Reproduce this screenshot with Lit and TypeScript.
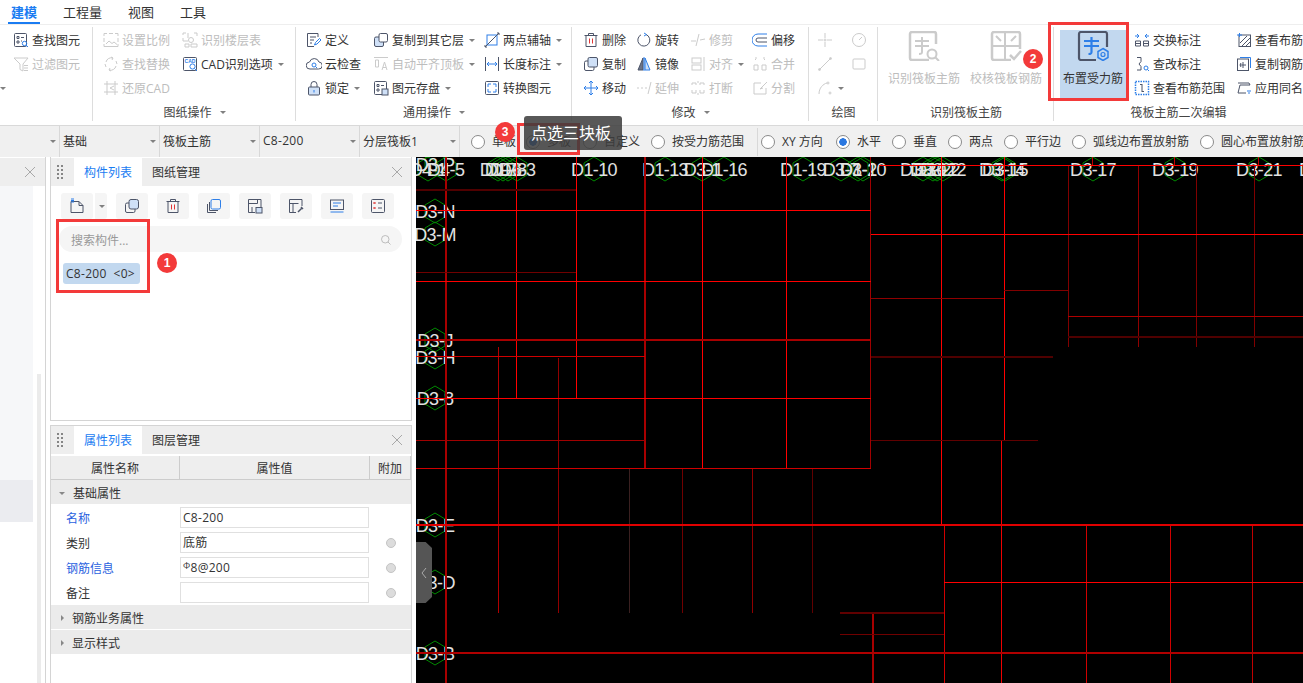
/**
 * Ribbon CAD editor screen: ribbon, option bar, component panels and drawing canvas
 */

import { LitElement, html, svg, css, TemplateResult } from 'lit';
import { customElement } from 'lit/decorators.js';

const ICONS: Record<string, TemplateResult> = {
  find: svg`<rect x="1.5" y="1.5" width="12" height="13" rx="1"/><path d="M4 4.5h2v2H4zM8 5.5h3M4 9h2v2H4zM8 9h1"/><circle class="a" cx="11.5" cy="11.5" r="2.2"/><path class="a" d="M13 13l2 2"/>`,
  filter: svg`<path d="M1 2h14L10 8v7L7 13.5V8zM11 9.5h4M11 12h4M11 14.5h4"/>`,
  scale: svg`<path d="M1 4V1.5h3M6 1.5h4M12 1.5h3V4M1 6v4M15 6v4M1 12v2.5h14V12M3 12l3-3 3 2.5 2-1.5 3 2.5"/>`,
  replace: svg`<path d="M3 6a5.5 5.5 0 0 1 7-4M13 10a5.5 5.5 0 0 1-7 4M8 1l2 1-1 2M8 15l-2-1 1-2M13 5l1 3M3 11l-1-3"/>`,
  restore: svg`<path d="M4 1v14M12 1v14M1 4h14M1 12h14M11 6L7 8l4 2"/>`,
  layers: svg`<path d="M1 3V1h3M1 6v3h5M6 1v5M12 1h3v3M3 12v3h4v-3zM9 12h6v3H9z"/><circle cx="9" cy="8" r="2.5"/>`,
  cad: svg`<rect x="1.5" y="1.5" width="13" height="13" rx="1"/><text class="a t" x="2.6" y="6.8">CAD</text><circle class="a" cx="10.5" cy="10.5" r="2.6"/><path class="a" d="M12.5 12.5l2.5 2.5"/>`,
  define: svg`<path d="M12 5V1.5H1.5v13H8M4 5h6M4 8h4M4 11h2"/><path class="a" d="M8.5 13l1-2.5 4-4 1.5 1.5-4 4z"/>`,
  cloud: svg`<path d="M4 13a3.5 3.5 0 0 1-.5-7A5 5 0 0 1 13 6a3.5 3.5 0 0 1-.5 7z"/><circle class="a" cx="8" cy="9" r="2"/><path class="a" d="M9.5 10.5l1.5 1.5"/>`,
  lock: svg`<path d="M5 7V4.5a3 3 0 0 1 6 0V7"/><rect class="l" x="2.5" y="7" width="11" height="8" rx="1"/><path class="a" d="M8 10v2.5"/>`,
  copyLayer: svg`<rect class="l" x="1.5" y="5" width="9" height="9.5" rx="1.5"/><rect x="6" y="1.5" width="8.5" height="8.5" rx="1.5" fill="#fff"/>`,
  autoAlign: svg`<path d="M1 1.5h14M2.5 4v7h3V4zM9 14l2.5-8L14 14M10 11.500h3"/>`,
  store: svg`<rect x="1.500" y="1.500" width="12" height="13" rx="1"/><path d="M4 4.500h2v2H4zM8 5.500h3M4 9h2v2H4z"/><rect class="l" x="9" y="9" width="6" height="6"/>`,
  axis: svg`<rect class="a" x="3" y="3" width="10" height="10"/><path d="M1 15L15 1M13 1h2v2M1 13v2h2"/>`,
  length: svg`<path d="M1.500 1v14M14.500 1v14"/><path class="a" d="M3 8h10M5 6L3 8l2 2M11 6l2 2-2 2"/>`,
  convert: svg`<rect x="1.500" y="1.500" width="13" height="13" rx="1"/><path class="a" d="M4 7V4h3M12 9v3H9M9 4h3v3M4 9v3h3"/>`,
  del: svg`<path d="M1.500 3.500h13M5.500 3.500V1.500h5v2M3 3.500v11h10v-11"/><path class="r" d="M6.500 6.500v5M9.500 6.500v5"/>`,
  copy: svg`<rect class="l" x="5" y="1.500" width="9.500" height="9.500" rx="1.500"/><path d="M5 5H3a1.500 1.500 0 0 0-1.500 1.500V13A1.500 1.500 0 0 0 3 14.500h6.500A1.500 1.500 0 0 0 11 13v-2"/>`,
  move: svg`<path class="a" d="M8 1v14M1 8h14M6 3l2-2 2 2M6 13l2 2 2-2M3 6L1 8l2 2M13 6l2 2-2 2"/>`,
  rotate: svg`<path d="M10 2.500A6 6 0 1 1 5 2.800"/><path class="a" d="M8 1l2.500 1.500L8 4"/>`,
  mirror: svg`<path class="lf" d="M9 2l5 12H9z"/><path d="M7 2L2 14h5z" fill="#6c7488"/><path class="a" d="M8 1v14"/>`,
  trim: svg`<path d="M1 9h5M10 8l5-1M9 2L6 14"/>`,
  align: svg`<rect x="2" y="2" width="9" height="5"/><rect x="2" y="9" width="9" height="5"/><path d="M14 1v14"/>`,
  extend: svg`<path d="M1 8h2M5 8h2M9 8h2M15 2l-3 12"/>`,
  breakAt: svg`<path d="M2 5V3h4v2M10 5V3h4v2M2 10v3h4v-3M10 10v3h4v-3M8 1v2M8 13v2"/>`,
  offset: svg`<path class="a" d="M15 2H6a6 6 0 0 0 0 12h9"/><path d="M15 6H6a2 2 0 0 0 0 4h9"/>`,
  merge: svg`<path d="M2 9h4v5H2zM10 9h4v5h-4zM3 3l1 1M13 3l-1 1M4 1v2M12 1v2"/>`,
  split: svg`<path d="M9 3H2v11h12V8M15 2L8 9M8 9l3-1"/>`,
  point: svg`<path d="M8 1v5M8 10v5M1 8h5M10 8h5"/><circle cx="8" cy="8" r="1"/>`,
  radius: svg`<circle cx="8" cy="8" r="6.500"/><path d="M8 8l3-3"/>`,
  line: svg`<path d="M2 14L14 2"/><circle cx="2.500" cy="13.500" r="1"/><circle cx="13.500" cy="2.500" r="1"/>`,
  box: svg`<rect x="2" y="3" width="12" height="10" rx="1"/>`,
  arc: svg`<path d="M2 14c0-6 4-10 8-11"/><circle cx="11" cy="3" r="1"/><circle cx="13" cy="13" r="1"/>`,
  swap: svg`<path d="M1.500 9h5v5h-5zM9.500 9h5v5h-5zM1.500 11.500h5M9.500 11.500h5"/><path class="a" d="M1 4h4M3 2l2 2-2 2M15 4h-4M13 2l-2 2 2 2"/>`,
  edit: svg`<path d="M3 1.500h4v4L5 8l2 2.500V14H3"/><circle class="a" cx="12" cy="12" r="2"/><path class="a" d="M13.500 13.500l1.500 1.500"/>`,
  range: svg`<rect class="a dash" x="1.500" y="1.500" width="13" height="13"/><path d="M8 4v8M6 4.500h2M8 11.500h2"/>`,
  hatch: svg`<rect x="3" y="3" width="11.500" height="11.500"/><path d="M4 11l7-7M6 14l8-8M10 14l4-4"/><path class="a" d="M1 3h5M3.500 1v4"/>`,
  copyBar: svg`<rect x="1.500" y="3" width="11" height="11.500"/><path class="a" d="M4 1.500h10.500V12"/><path d="M4 9h6M7 6v6M5 7L4 9l1 2"/>`,
  apply: svg`<path d="M2 3h11l1 2H4l-2 8h8"/><path class="a" d="M11 11h4M12 13h2"/>`,
  newDoc: svg`<path d="M2 3.500h8l4 4v7H2z"/><path d="M10 3.500v4h4"/><path class="a" d="M2 1h3M2 2.500h3M2 4h3"/>`,
  copyTool: svg`<rect class="l" x="5" y="1.500" width="9.500" height="9.500" rx="2"/><path d="M5 5H3a1.500 1.500 0 0 0-1.500 1.500V13A1.500 1.500 0 0 0 3 14.500h6.500A1.500 1.500 0 0 0 11 13v-2"/>`,
  copyMany: svg`<rect class="a" x="5" y="1.500" width="9.500" height="9.500" rx="1.500"/><path d="M3.500 4v8.500h8.500M1.500 6v8.500h8.500"/>`,
  saveTpl: svg`<path d="M14 9V1.500H1.500v13H8M1.500 5.500h9V1.500M5 14.500V9"/><rect class="l" x="9" y="9.500" width="6" height="5.500"/>`,
  pick: svg`<path d="M14 8V1.500H1.500v13H8M1.500 5.500h9M5 14.500V5.500"/><path d="M10 14l4-4M13 9l2 2" stroke-width="1.500"/>`,
  listing: svg`<rect x="1.500" y="2" width="13" height="9.500"/><path class="a" d="M4 5h8M4 8h5M1.500 14h13"/>`,
  attrs: svg`<rect x="1.500" y="1.500" width="13" height="13" rx="1"/><path class="r" d="M3.500 4l2 2M5.500 4l-2 2M3.500 9l2 2M5.500 9l-2 2"/><path d="M8 5h4M8 10h4"/>`,
  trash: svg`<path d="M1.500 3.500h13M5.500 3.500V1.500h5v2M3 3.500v11h10v-11"/><path class="r" d="M6.500 6.500v5M9.500 6.500v5"/>`,
  search: svg`<circle cx="7" cy="7" r="5"/><path d="M10.500 10.500l3.500 3.500"/>`,
};

const BIG_ICONS: Record<string, TemplateResult> = {
  identify: svg`<path d="M21 29H4a2 2 0 0 1-2-2V3a2 2 0 0 1 2-2h22a2 2 0 0 1 2 2v10" stroke-width="2.500"/><path d="M7 10h14M7 15h14M14 6v15c0 2-1 2-3 2" stroke-width="2"/><circle cx="24" cy="23" r="4.500" stroke-width="2"/><path d="M27.500 26.500l3.500 3.500" stroke-width="2"/>`,
  verify: svg`<path d="M21 29H4a2 2 0 0 1-2-2V3a2 2 0 0 1 2-2h24a2 2 0 0 1 2 2v15" stroke-width="2.500"/><path d="M15 1v28M2 15h28M6 5l5 5M26 5l-5 5" stroke-width="2"/><path d="M20 24l4 4 7-8" stroke-width="2.500"/>`,
  place: svg`<path d="M19 29H4a2 2 0 0 1-2-2V3a2 2 0 0 1 2-2h24a2 2 0 0 1 2 2v13" stroke-width="2.200"/><path class="a" d="M7 10h15M7 15h15M14.500 6v15c0 2-1 2-3 2" stroke-width="2.200"/><path class="a" d="M26 17.500l5 3v6l-5 3-5-3v-6z" fill="#c2d8ef" stroke-width="1.500"/><circle class="a" cx="26" cy="23.500" r="2" stroke-width="1.200"/>`,
};

interface RibbonItem {
  icon: string;
  text?: string;
  caret?: boolean;
  off?: boolean;
}
interface RibbonCol {
  w?: number;
  items?: RibbonItem[];
  big?: { icon: string; text: string; off?: boolean; on?: boolean; w: number };
}
interface RibbonGroup {
  w: number;
  pad: number;
  label: string;
  caret?: boolean;
  cols: RibbonCol[];
}

const GROUPS: RibbonGroup[] = [
  {
    w: 93,
    pad: 13,
    label: '',
    cols: [
      {
        items: [
          { icon: 'find', text: '查找图元' },
          { icon: 'filter', text: '过滤图元', off: true },
        ],
      },
    ],
  },
  {
    w: 203,
    pad: 10,
    label: '图纸操作',
    caret: true,
    cols: [
      {
        w: 79,
        items: [
          { icon: 'scale', text: '设置比例', off: true },
          { icon: 'replace', text: '查找替换', off: true },
          { icon: 'restore', text: '还原CAD', off: true },
        ],
      },
      {
        items: [
          { icon: 'layers', text: '识别楼层表', off: true },
          { icon: 'cad', text: 'CAD识别选项', caret: true },
        ],
      },
    ],
  },
  {
    w: 276,
    pad: 10,
    label: '通用操作',
    caret: true,
    cols: [
      {
        w: 67,
        items: [
          { icon: 'define', text: '定义' },
          { icon: 'cloud', text: '云检查' },
          { icon: 'lock', text: '锁定', caret: true },
        ],
      },
      {
        w: 111,
        items: [
          { icon: 'copyLayer', text: '复制到其它层', caret: true },
          { icon: 'autoAlign', text: '自动平齐顶板', caret: true, off: true },
          { icon: 'store', text: '图元存盘', caret: true },
        ],
      },
      {
        items: [
          { icon: 'axis', text: '两点辅轴', caret: true },
          { icon: 'length', text: '长度标注', caret: true },
          { icon: 'convert', text: '转换图元' },
        ],
      },
    ],
  },
  {
    w: 237,
    pad: 11,
    label: '修改',
    caret: true,
    cols: [
      {
        w: 53,
        items: [
          { icon: 'del', text: '删除' },
          { icon: 'copy', text: '复制' },
          { icon: 'move', text: '移动' },
        ],
      },
      {
        w: 54,
        items: [
          { icon: 'rotate', text: '旋转' },
          { icon: 'mirror', text: '镜像' },
          { icon: 'extend', text: '延伸', off: true },
        ],
      },
      {
        w: 62,
        items: [
          { icon: 'trim', text: '修剪', off: true },
          { icon: 'align', text: '对齐', caret: true, off: true },
          { icon: 'breakAt', text: '打断', off: true },
        ],
      },
      {
        items: [
          { icon: 'offset', text: '偏移' },
          { icon: 'merge', text: '合并', off: true },
          { icon: 'split', text: '分割', off: true },
        ],
      },
    ],
  },
  {
    w: 69,
    pad: 8,
    label: '绘图',
    cols: [
      {
        w: 34,
        items: [
          { icon: 'point', off: true },
          { icon: 'line', off: true },
          { icon: 'arc', caret: true, off: true },
        ],
      },
      {
        items: [
          { icon: 'radius', off: true },
          { icon: 'box', off: true },
        ],
      },
    ],
  },
  {
    w: 176,
    pad: 10,
    label: '识别筏板主筋',
    cols: [
      { w: 82, big: { icon: 'identify', text: '识别筏板主筋', off: true, w: 72 } },
      { big: { icon: 'verify', text: '校核筏板钢筋', off: true, w: 72 } },
    ],
  },
  {
    w: 249,
    pad: 6,
    label: '筏板主筋二次编辑',
    cols: [
      { w: 74, big: { icon: 'place', text: '布置受力筋', on: true, w: 66 } },
      {
        w: 102,
        items: [
          { icon: 'swap', text: '交换标注' },
          { icon: 'edit', text: '查改标注' },
          { icon: 'range', text: '查看布筋范围' },
        ],
      },
      {
        items: [
          { icon: 'hatch', text: '查看布筋范围' },
          { icon: 'copyBar', text: '复制钢筋' },
          { icon: 'apply', text: '应用同名' },
        ],
      },
    ],
  },
];

const SELECTS = [
  { w: 60, text: '' },
  { w: 100, text: '基础' },
  { w: 100, text: '筏板主筋' },
  { w: 100, text: 'C8-200', lat: true },
  { w: 100, text: '分层筏板1' },
];

const MODES = [
  { w: 55, text: '单板' },
  { w: 57, text: '多板', on: true },
  { w: 68, text: '自定义' },
  { w: 106, text: '按受力筋范围' },
];

const DIRECTIONS = [
  { w: 75, text: 'XY 方向' },
  { w: 56, text: '水平', on: true },
  { w: 56, text: '垂直' },
  { w: 56, text: '两点' },
  { w: 68, text: '平行边' },
  { w: 128, text: '弧线边布置放射筋' },
  { w: 110, text: '圆心布置放射筋' },
];

const TOOLS = ['copyTool', 'trash', 'copyMany', 'saveTpl', 'pick', 'listing', 'attrs'];

// x1, y1, x2, y2, colour, stroke width
type Seg = [number, number, number, number, string, number];

const SEGMENTS: Seg[] = [
  [446, 157, 446, 683, '#a80000', 2],
  [516, 157, 516, 398, '#ff0000', 1],
  [576, 157, 576, 398, '#ff0000', 1],
  [645, 157, 645, 468, '#a80000', 2],
  [702, 157, 702, 468, '#ff0000', 1],
  [786, 157, 786, 468, '#ff0000', 1],
  [498, 347, 498, 613, '#b00000', 1],
  [558, 358, 558, 613, '#900000', 1],
  [629, 468, 629, 613, '#3a2020', 1],
  [682, 468, 682, 613, '#700000', 1],
  [752, 468, 752, 613, '#900000', 1],
  [812, 468, 812, 613, '#600000', 1],
  [870, 157, 870, 468, '#a00000', 1],
  [873, 613, 873, 683, '#a80000', 2],
  [941, 157, 941, 524, '#ff0000', 1],
  [944, 524, 944, 683, '#d00000', 1],
  [1004, 157, 1004, 441, '#ff0000', 1],
  [1001, 441, 1001, 683, '#f00000', 1],
  [1068, 165, 1068, 347, '#800000', 1],
  [1138, 165, 1138, 347, '#900000', 1],
  [1196, 165, 1196, 347, '#800000', 1],
  [1254, 165, 1254, 347, '#800000', 1],
  [1092, 157, 1092, 165, '#c00000', 1],
  [1174, 157, 1174, 165, '#c00000', 1],
  [1258, 157, 1258, 165, '#c00000', 1],
  [1086, 524, 1086, 683, '#d00000', 1],
  [1170, 524, 1170, 683, '#d00000', 1],
  [1252, 524, 1252, 683, '#c00000', 1],
  [879, 165, 1303, 165, '#ff0000', 1],
  [416, 190, 576, 190, '#500000', 2],
  [416, 210, 871, 210, '#ff0000', 1],
  [871, 234, 1303, 234, '#ff0000', 1],
  [416, 272, 576, 272, '#700000', 1],
  [416, 281, 871, 281, '#ff0000', 1],
  [1004, 290, 1068, 290, '#800000', 1],
  [871, 298, 1004, 298, '#900000', 1],
  [1068, 316, 1303, 316, '#b00000', 1],
  [1068, 337, 1303, 337, '#500000', 2],
  [416, 340, 871, 340, '#a80000', 2],
  [416, 356, 645, 356, '#d00000', 1],
  [871, 357, 1053, 357, '#500000', 2],
  [416, 398, 871, 398, '#ff0000', 1],
  [416, 440, 645, 440, '#a00000', 1],
  [871, 440, 1038, 440, '#600000', 1],
  [416, 468, 871, 468, '#d00000', 1],
  [416, 525, 1303, 525, '#e00000', 2],
  [944, 582, 1303, 582, '#ff0000', 1],
  [840, 613, 944, 613, '#600000', 2],
  [840, 634, 944, 634, '#700000', 1],
  [416, 653, 1303, 653, '#b00000', 2],
];

const TOP_AXES: [number, string][] = [
  [428, 'D4-1'],
  [446, 'D4-5'],
  [498, 'D1-7'],
  [503, 'D1-6'],
  [508, 'D1-8'],
  [517, 'D1-3'],
  [594, 'D1-10'],
  [665, 'D1-13'],
  [702, 'D3-1'],
  [724, 'D1-16'],
  [803, 'D1-19'],
  [841, 'D3-7'],
  [858, 'D3-1'],
  [863, 'D1-20'],
  [923, 'D3-10'],
  [933, 'D3-12'],
  [937, 'D3-22'],
  [943, 'D3-12'],
  [1002, 'D3-14'],
  [1005, 'D3-15'],
  [1093, 'D3-17'],
  [1175, 'D3-19'],
  [1259, 'D3-21'],
  [1322, 'D3-23'],
];

const SIDE_AXES: [number, string][] = [
  [164, 'D3-P'],
  [211, 'D3-N'],
  [234, 'D3-M'],
  [340, 'D3-J'],
  [357, 'D3-H'],
  [398, 'D3-8'],
  [525, 'D3-E'],
  [582, 'D3-D'],
  [653, 'D3-B'],
];

const hexagon = (x: number, y: number) =>
  svg`<polygon class="hex" points="${x},${y - 12} ${x + 10},${y - 6} ${x + 10},${y + 6} ${x},${y + 12} ${x - 10},${y + 6} ${x - 10},${y - 6}"/>`;

@customElement('app-root')
export class AppRoot extends LitElement {
  static override styles = css`
    :host {
      display: block;
      position: relative;
      width: 1303px;
      height: 683px;
      overflow: hidden;
      background: #fff;
      color: #333;
      font: 12px 'Open Sans', 'Noto Sans CJK SC', 'Liberation Sans', sans-serif;
    }

    .ico {
      flex: none;
      width: 16px;
      height: 16px;
      fill: none;
      stroke: currentColor;
      stroke-width: 1;
      color: #4d5569;
      --a: #2e7fe8;
      --l: #cfe0f7;
      --r: #e03535;
    }
    .ico .a {
      stroke: var(--a);
    }
    .ico .r {
      stroke: var(--r);
    }
    .ico .l {
      fill: var(--l);
    }
    .ico .lf {
      fill: var(--l);
      stroke: var(--a);
    }
    .ico .dash {
      stroke-dasharray: 1.5 1;
      stroke-width: 1.5;
    }
    .ico .t {
      font: bold 5px 'Liberation Sans', sans-serif;
      fill: var(--a);
      stroke: none;
    }
    .off .ico {
      color: #cbcbcb;
      --a: #cbcbcb;
      --l: #fff;
      --r: #cbcbcb;
    }

    .select .lbl,
    .radio-item .lbl {
      margin-top: -2px;
    }

    .tabs {
      display: flex;
      gap: 26px;
      height: 24px;
      padding-left: 11px;
      border-bottom: 1px solid #eee;
      font-size: 13px;
      line-height: 24px;
    }
    .tab {
      position: relative;
    }
    .tab.on {
      color: #1a7cf2;
      font-weight: 700;
    }
    .tab.on::after {
      content: '';
      position: absolute;
      left: -3px;
      right: -3px;
      bottom: 0;
      height: 2px;
      background: #1a7cf2;
    }

    .ribbon {
      display: flex;
      height: 100px;
      border-bottom: 1px solid #d9d9d9;
    }
    .group {
      display: flex;
      flex: none;
      flex-direction: column;
      box-sizing: border-box;
      position: relative;
    }
    .group::after {
      content: '';
      position: absolute;
      right: 0;
      top: 2px;
      bottom: 4px;
      width: 1px;
      background: #ddd;
    }
    .group:last-child::after {
      display: none;
    }
    .cols {
      display: flex;
      height: 72px;
      padding-top: 3px;
    }
    .col {
      flex: none;
      white-space: nowrap;
    }
    .row {
      display: flex;
      align-items: center;
      gap: 3px;
      height: 24px;
    }
    .row.off,
    .big.off {
      color: #bdbdbd;
    }
    .big {
      display: flex;
      flex-direction: column;
      align-items: center;
      box-sizing: border-box;
      height: 68px;
      margin-top: 2px;
      padding-top: 1px;
      line-height: 16px;
      white-space: nowrap;
    }
    .big.on {
      background: #c2d8ef;
      color: #333;
    }
    .big .ico {
      width: 32px;
      height: 30px;
      margin-bottom: 10px;
    }
    .group-label {
      display: flex;
      align-items: center;
      justify-content: center;
      gap: 6px;
      height: 24px;
      color: #444;
    }
    .caret {
      flex: none;
      width: 0;
      height: 0;
      margin-left: 2px;
      border: 3px solid transparent;
      border-top: 3px solid #808080;
      border-bottom: 0;
    }
    .lone {
      position: absolute;
      left: -2px;
      top: 87px;
    }

    .options {
      display: flex;
      align-items: center;
      height: 31px;
      background: #f0f0f0;
      white-space: nowrap;
    }
    .select {
      display: flex;
      flex: none;
      align-items: center;
      justify-content: space-between;
      box-sizing: border-box;
      height: 31px;
      padding: 0 3px 0 3px;
      border-right: 1px solid #d8d8d8;
    }
    .select .lat {
      letter-spacing: 0.3px;
    }
    .radio-item {
      display: flex;
      flex: none;
      align-items: center;
      gap: 7px;
    }
    .radio {
      flex: none;
      box-sizing: border-box;
      width: 14px;
      height: 14px;
      border: 1px solid #8a8a8a;
      border-radius: 50%;
      background: #fff;
    }
    .radio.on {
      background: radial-gradient(circle, #2a77e0 0 3.5px, #fff 4px);
      border-color: #8a8a8a;
    }
    .modes {
      display: flex;
      padding-left: 11px;
    }
    .opt-sep {
      flex: none;
      width: 1px;
      height: 28px;
      margin-right: 3px;
      background: #d8d8d8;
    }

    .main {
      display: flex;
      height: 526px;
    }
    .sidebar {
      display: flex;
      flex: none;
      flex-direction: column;
      box-sizing: border-box;
      width: 46px;
      border-right: 1px solid #d4d4d4;
    }
    .side-head {
      display: flex;
      align-items: center;
      justify-content: flex-end;
      flex: none;
      height: 28px;
      margin-top: 1px;
      padding-right: 1px;
      background: #eee;
    }
    .side-body {
      display: flex;
      flex: 1;
      gap: 4px;
    }
    .side-list {
      display: flex;
      flex-direction: column;
      justify-content: flex-end;
      box-sizing: border-box;
      width: 33px;
      height: 336px;
      background: #f6f7f9;
    }
    .side-pick {
      height: 42px;
      background: #ebecf0;
    }
    .side-track {
      width: 4px;
      margin-top: 188px;
      background: #ebebeb;
    }

    .panels {
      display: flex;
      flex: none;
      flex-direction: column;
      gap: 4px;
      width: 362px;
      margin-left: 4px;
    }
    .panel {
      box-sizing: border-box;
      border: 1px solid #d4d4d4;
      background: #fff;
    }
    .panel.list {
      height: 264px;
      border-top: 0;
    }
    .panel.attrs {
      flex: 1;
      border-bottom: 0;
    }
    .panel-head {
      display: flex;
      align-items: center;
      height: 28px;
      margin-top: 1px;
      background: #eee;
    }
    .panel.attrs .panel-head {
      margin-top: 0;
    }
    .grip {
      flex: none;
      width: 6px;
      height: 14px;
      margin: 0 11px 0 6px;
      background: conic-gradient(#858585 25%, transparent 0) -2px 0 / 4px 4px;
    }
    .panel-tab {
      display: flex;
      align-items: center;
      height: 28px;
      padding: 0 10px;
    }
    .panel-tab.on {
      background: #fff;
      color: #1a7cf2;
    }
    .close {
      margin-left: auto;
      margin-right: 9px;
      width: 10px;
      height: 10px;
      fill: none;
      stroke: #a8a8a8;
      stroke-width: 1;
    }
    .tools {
      display: flex;
      gap: 9px;
      padding: 7px 0 0 10px;
    }
    .tool {
      display: flex;
      align-items: center;
      justify-content: center;
      width: 32px;
      height: 26px;
      border-radius: 3px;
      background: #f5f5f5;
    }
    .tool-split {
      display: flex;
      align-items: center;
      justify-content: center;
      width: 12px;
      height: 26px;
      margin-left: -8px;
      border-left: 1px solid #fff;
      border-radius: 0 3px 3px 0;
      background: #f5f5f5;
    }
    .search {
      display: flex;
      align-items: center;
      justify-content: space-between;
      box-sizing: border-box;
      height: 26px;
      margin: 7px 9px 0 8px;
      padding: 2px 10px 0 12px;
      border-radius: 13px;
      background: #f5f5f5;
      color: #999;
    }
    .search .ico {
      width: 12px;
      height: 12px;
      color: #aaa;
    }
    .chip {
      display: inline-block;
      margin: 11px 0 0 12px;
      width: 77px;
      height: 21px;
      box-sizing: border-box;
      padding-left: 3px;
      border-radius: 3px;
      background: #c2d8ef;
      letter-spacing: 0.3px;
      line-height: 21px;
      white-space: pre;
    }

    .grid {
      display: grid;
      grid-template-columns: 129px 190px 41px;
      margin-top: 1px;
      border-top: 1px solid #fff;
    }
    .th {
      box-sizing: border-box;
      height: 24px;
      border-right: 1px solid #ccc;
      border-bottom: 1px solid #ccc;
      background: #eee;
      line-height: 25px;
      text-align: center;
    }
    .sec {
      grid-column: 1 / -1;
      display: flex;
      align-items: center;
      gap: 7px;
      box-sizing: border-box;
      height: 24px;
      margin-bottom: 1px;
      padding: 2px 0 0 8px;
      background: #ebebeb;
    }
    .sec-open {
      width: 0;
      height: 0;
      border: 3px solid transparent;
      border-top: 3px solid #888;
      border-bottom: 0;
      margin-right: 1px;
    }
    .sec-shut {
      width: 0;
      height: 0;
      margin: 0 1px 0 2px;
      border: 3px solid transparent;
      border-left: 3px solid #888;
      border-right: 0;
    }
    .name {
      display: flex;
      align-items: center;
      height: 25px;
      padding-left: 15px;
    }
    .name.blue {
      color: #2a62e0;
    }
    .val {
      display: flex;
      align-items: center;
      height: 25px;
    }
    .input {
      box-sizing: border-box;
      width: 189px;
      height: 21px;
      padding-left: 2px;
      border: 1px solid #e0e0e0;
      letter-spacing: 0.3px;
      line-height: 19px;
      white-space: nowrap;
    }
    .grade {
      position: relative;
      top: -3px;
      font-size: 9px;
    }
    .extra {
      display: flex;
      align-items: center;
      justify-content: center;
    }
    .dot {
      width: 8px;
      height: 8px;
      border: 1px solid #c4c4c4;
      border-radius: 50%;
      background: #dcdcdc;
    }

    .canvas {
      display: block;
      flex: none;
      width: 887px;
      height: 526px;
      margin-left: 4px;
      background: #000;
    }
    .canvas .hex {
      fill: none;
      stroke: #008a00;
      stroke-width: 1;
    }
    .canvas text {
      font: 18px 'Liberation Sans', sans-serif;
      letter-spacing: -0.6px;
      fill: #e2e2e2;
      text-anchor: middle;
    }
    .canvas line {
      shape-rendering: crispEdges;
    }

    .mark {
      position: absolute;
      box-sizing: border-box;
      border: 3px solid #f33a3a;
    }
    .mark.one {
      left: 56px;
      top: 219px;
      width: 94px;
      height: 74px;
    }
    .mark.two {
      left: 1048px;
      top: 22px;
      width: 81px;
      height: 79px;
    }
    .mark.three {
      left: 517px;
      top: 123px;
      width: 63px;
      height: 32px;
    }
    .badge {
      position: absolute;
      width: 20px;
      height: 20px;
      border-radius: 50%;
      background: #f33a3a;
      color: #fff;
      font: bold 12px/20px 'Liberation Sans', sans-serif;
      text-align: center;
    }
    .badge.one {
      left: 157px;
      top: 253px;
    }
    .badge.two {
      left: 1023px;
      top: 49px;
    }
    .badge.three {
      left: 495px;
      top: 122px;
    }
    .tooltip {
      position: absolute;
      left: 524px;
      top: 116px;
      width: 98px;
      height: 34px;
      border-radius: 3px;
      background: rgba(60, 60, 60, 0.86);
      color: #fff;
      font-size: 16px;
      line-height: 34px;
      padding-left: 7px;
      box-sizing: border-box;
    }
    .handle {
      position: absolute;
      left: 416px;
      top: 542px;
      display: flex;
      align-items: center;
      justify-content: center;
      width: 16px;
      height: 61px;
      background: #555;
      clip-path: polygon(0 0, 60% 0, 100% 10%, 100% 90%, 60% 100%, 0 100%);
    }
    .handle svg {
      width: 6px;
      height: 10px;
      fill: none;
      stroke: #aaa;
    }
  `;

  private icon(name: string) {
    return html`<svg class="ico" viewBox="0 0 16 16">${ICONS[name]}</svg>`;
  }

  private renderGroup(g: RibbonGroup) {
    return html`
      <div class="group" style="width:${g.w}px">
        <div class="cols" style="padding-left:${g.pad}px">
          ${g.cols.map(
            (c) => html`
              <div class="col" style=${c.w ? `width:${c.w}px` : ''}>
                ${c.big
                  ? html`<div class="big ${c.big.off ? 'off' : ''} ${c.big.on ? 'on' : ''}" style="width:${c.big.w}px">
                      <svg class="ico" viewBox="0 0 32 30">${BIG_ICONS[c.big.icon]}</svg>
                      ${c.big.text}
                    </div>`
                  : c.items?.map(
                      (it) => html`
                        <div class="row ${it.off ? 'off' : ''}">
                          ${this.icon(it.icon)} ${it.text ? html`<span class="lbl">${it.text}</span>` : ''}
                          ${it.caret ? html`<i class="caret"></i>` : ''}
                        </div>
                      `,
                    )}
              </div>
            `,
          )}
        </div>
        <div class="group-label">
          ${g.label ? html`<span class="lbl">${g.label}</span>` : ''} ${g.caret ? html`<i class="caret"></i>` : ''}
        </div>
      </div>
    `;
  }

  private renderRadio(r: { w: number; text: string; on?: boolean }) {
    return html`<div class="radio-item" style="width:${r.w}px">
      <span class="radio ${r.on ? 'on' : ''}"></span><span class="lbl">${r.text}</span>
    </div>`;
  }

  private closeIcon() {
    return html`<svg class="close" viewBox="0 0 10 10"><path d="M0 0l10 10M10 0L0 10" /></svg>`;
  }

  private renderPropRow(name: string, value: unknown, opts: { blue?: boolean; dot?: boolean }) {
    return html`
      <div class="name ${opts.blue ? 'blue' : ''}">${name}</div>
      <div class="val"><div class="input">${value}</div></div>
      <div class="extra">${opts.dot ? html`<span class="dot"></span>` : ''}</div>
    `;
  }

  private renderCanvas() {
    return html`<svg class="canvas" viewBox="416 157 887 526">
      ${TOP_AXES.map(([x]) => hexagon(x, 169))} ${SIDE_AXES.map(([y]) => hexagon(435, y))}
      ${TOP_AXES.map(([x, t]) => svg`<text x=${x} y="176">${t}</text>`)}
      ${SIDE_AXES.map(([y, t]) => svg`<text x="435" y=${y + 7}>${t}</text>`)}
      ${SEGMENTS.map(([x1, y1, x2, y2, c, w]) => {
        const ox = x1 === x2 && w === 1 ? 0.5 : 0;
        const oy = y1 === y2 && w === 1 ? 0.5 : 0;
        return svg`<line x1=${x1 + ox} y1=${y1 + oy} x2=${x2 + ox} y2=${y2 + oy} stroke=${c} stroke-width=${w}/>`;
      })}
    </svg>`;
  }

  override render() {
    return html`
      <div class="tabs">
        <span class="tab on">建模</span><span class="tab">工程量</span><span class="tab">视图</span
        ><span class="tab">工具</span>
      </div>

      <div class="ribbon">${GROUPS.map((g) => this.renderGroup(g))}</div>

      <div class="options">
        ${SELECTS.map(
          (s) =>
            html`<div class="select" style="width:${s.w}px">
              <span class="lbl ${s.lat ? 'lat' : ''}">${s.text}</span><i class="caret"></i>
            </div>`,
        )}
        <div class="modes">${MODES.map((r) => this.renderRadio(r))}</div>
        <div class="opt-sep"></div>
        ${DIRECTIONS.map((r) => this.renderRadio(r))}
      </div>

      <div class="main">
        <div class="sidebar">
          <div class="side-head">${this.closeIcon()}</div>
          <div class="side-body">
            <div class="side-list"><div class="side-pick"></div></div>
            <div class="side-track"></div>
          </div>
        </div>

        <div class="panels">
          <div class="panel list">
            <div class="panel-head">
              <span class="grip"></span>
              <span class="panel-tab on">构件列表</span><span class="panel-tab">图纸管理</span>
              ${this.closeIcon()}
            </div>
            <div class="tools">
              <div class="tool">${this.icon('newDoc')}</div>
              <div class="tool-split"><i class="caret"></i></div>
              ${TOOLS.map((t) => html`<div class="tool">${this.icon(t)}</div>`)}
            </div>
            <div class="search"><span>搜索构件...</span>${this.icon('search')}</div>
            <div class="chip">C8-200  &lt;0&gt;</div>
          </div>

          <div class="panel attrs">
            <div class="panel-head">
              <span class="grip"></span>
              <span class="panel-tab on">属性列表</span><span class="panel-tab">图层管理</span>
              ${this.closeIcon()}
            </div>
            <div class="grid">
              <div class="th">属性名称</div>
              <div class="th">属性值</div>
              <div class="th">附加</div>
              <div class="sec"><i class="sec-open"></i>基础属性</div>
              ${this.renderPropRow('名称', 'C8-200', { blue: true })} ${this.renderPropRow('类别', '底筋', { dot: true })}
              ${this.renderPropRow('钢筋信息', html`<span class="grade">Φ</span>8@200`, { blue: true, dot: true })}
              ${this.renderPropRow('备注', '', { dot: true })}
              <div class="sec"><i class="sec-shut"></i>钢筋业务属性</div>
              <div class="sec"><i class="sec-shut"></i>显示样式</div>
            </div>
          </div>
        </div>

        ${this.renderCanvas()}
      </div>

      <i class="caret lone"></i>
      <div class="mark one"></div>
      <div class="mark two"></div>
      <div class="mark three"></div>
      <div class="badge one">1</div>
      <div class="badge two">2</div>
      <div class="badge three">3</div>
      <div class="tooltip">点选三块板</div>
      <div class="handle"><svg viewBox="0 0 6 10"><path d="M5 0L1 5l4 5" /></svg></div>
    `;
  }
}

declare global {
  interface HTMLElementTagNameMap {
    'app-root': AppRoot;
  }
}
